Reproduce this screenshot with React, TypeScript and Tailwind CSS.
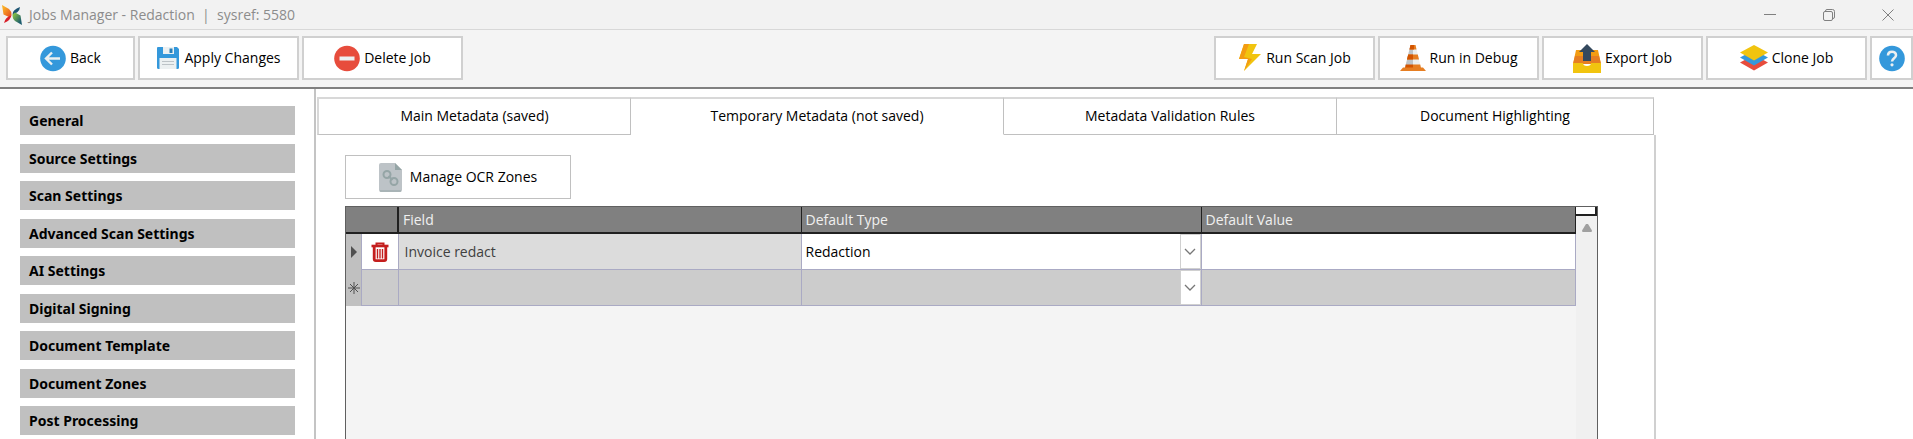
import type { ReactNode } from "react";

const sections = [
  "General",
  "Source Settings",
  "Scan Settings",
  "Advanced Scan Settings",
  "AI Settings",
  "Digital Signing",
  "Document Template",
  "Document Zones",
  "Post Processing",
];

const tabs = [
  "Main Metadata (saved)",
  "Temporary Metadata (not saved)",
  "Metadata Validation Rules",
  "Document Highlighting",
];

function LogoIcon() {
  return (
    <svg width="20" height="20" viewBox="0 0 20 20" aria-hidden="true">
      <defs>
        <linearGradient id="wing-left" x1="0" y1="0" x2="1" y2="1">
          <stop offset="0.2" stopColor="#f9ae25" />
          <stop offset="1" stopColor="#e5481f" />
        </linearGradient>
        <linearGradient id="wing-right" x1="0" y1="0" x2="1" y2="1">
          <stop offset="0.2" stopColor="#7ab648" />
          <stop offset="0.8" stopColor="#1c5b6e" />
        </linearGradient>
      </defs>
      <path d="M0 0 7 4Q9.500 6 9.500 10L7 12 1.500 9.500Z" fill="url(#wing-left)" />
      <path d="M9.500 10Q9 15 2 18Q3 12.500 9.500 10Z" fill="#d8202a" />
      <path d="M10.500 9.500Q10.500 4.500 18 2Q17.500 7.500 10.500 9.500Z" fill="#1d5573" />
      <path d="M10.500 9.500 13 7.500 18.500 10.500 20 20 13 16Q10.500 14 10.500 9.500Z" fill="url(#wing-right)" />
    </svg>
  );
}

function BackIcon() {
  return (
    <svg width="26" height="27" viewBox="0 0 26 27" aria-hidden="true">
      <circle cx="13" cy="13.500" r="12.800" fill="#3498db" />
      <path d="M20 13.500H7M12 7.500l-6 6 6 6" fill="none" stroke="#ecf0f1" strokeWidth="2.400" />
    </svg>
  );
}

function SaveIcon() {
  return (
    <svg width="24" height="24" viewBox="0 0 24 24" aria-hidden="true">
      <path d="M2 1h19l2 2v18.500a1.500 1.500 0 0 1-1.500 1.500h-19A1.500 1.500 0 0 1 1 21.500V2a1 1 0 0 1 1-1Z" fill="#3498db" />
      <path d="M7 1h11v7H7Z" fill="#ecf0f1" />
      <path d="M13.500 2.500h3v4.500h-3Z" fill="#2980b9" />
      <path d="M3.500 12h17v11h-17Z" fill="#ecf0f1" />
      <path d="M6 15.500h12M6 18.500h12" stroke="#bdc3c7" strokeWidth="1.200" />
    </svg>
  );
}

function DeleteIcon() {
  return (
    <svg width="26" height="27" viewBox="0 0 26 27" aria-hidden="true">
      <circle cx="13" cy="13.500" r="12.800" fill="#e74c3c" />
      <path d="M5.500 11.500h15v4h-15Z" fill="#ecf0f1" />
    </svg>
  );
}

function BoltIcon() {
  return (
    <svg width="24" height="28" viewBox="0 0 24 28" aria-hidden="true">
      <path d="M6 0h13l-5 10h9L6 27l4-12H1Z" fill="#f1c40f" />
      <path d="M6 0h5L6 13l8 2-8 12 4-12H1Z" fill="#f39c12" />
    </svg>
  );
}

function ConeIcon() {
  return (
    <svg width="26" height="26" viewBox="0 0 26 26" aria-hidden="true">
      <path d="M10.500 0h5L21 23H5Z" fill="#ecf0f1" />
      <path d="M10.500 0H13v23H5Z" fill="#bdc3c7" />
      <path d="M10.500 0h5l1 4.500h-7ZM8.200 9.500h9.600l1.200 5H7Z" fill="#e67e22" />
      <path d="M10.500 0H14v4.500H9.500ZM8.200 9.500H13v5H7ZM5.700 19.500H13V23H5Z" fill="#d35400" />
      <path d="M13 19.500h7.200L21 23h-8Z" fill="#e67e22" />
      <path d="M3 22.500h20l3 3.500H0Z" fill="#e67e22" />
    </svg>
  );
}

function ExportIcon() {
  return (
    <svg width="28" height="29" viewBox="0 0 28 29" aria-hidden="true">
      <path d="M3 6h22l3 14H0Z" fill="#f39c12" />
      <path d="M2 12h24l2 8H0Z" fill="#e67e22" />
      <path d="M0 19h10a4 3 0 0 0 8 0h10v10H0Z" fill="#f1c40f" />
      <path d="M14 0l8 8h-4v9h-8V8H6Z" fill="#34495e" />
    </svg>
  );
}

function LayersIcon() {
  return (
    <svg width="28" height="26" viewBox="0 0 28 26" aria-hidden="true">
      <path d="M0 17.500 14 10l14 7.500L14 25.500Z" fill="#e74c3c" />
      <path d="M0 12.500 14 5l14 7.500L14 20.500Z" fill="#3498db" />
      <path d="M0 7.500 14 0l14 7.500L14 15.500Z" fill="#f1c40f" />
    </svg>
  );
}

function HelpIcon() {
  return (
    <svg width="26" height="27" viewBox="0 0 26 27" aria-hidden="true">
      <circle cx="13" cy="13.500" r="12.800" fill="#3498db" />
      <path d="M9 10.500C9 5.500 17 5.500 17 10.200c0 3-4 3-4 6.300" fill="none" stroke="#ecf0f1" strokeWidth="2.600" />
      <circle cx="13" cy="19.800" r="1.600" fill="#ecf0f1" />
    </svg>
  );
}

function LinkFileIcon() {
  return (
    <svg width="23" height="29" viewBox="0 0 23 29" aria-hidden="true">
      <path d="M2 0h14l7 7v20a2 2 0 0 1-2 2H2a2 2 0 0 1-2-2V2a2 2 0 0 1 2-2Z" fill="#bdc3c7" />
      <path d="M16 0l7 7h-7Z" fill="#95a5a6" />
      <path d="M1 28h21" stroke="#95a5a6" />
      <g fill="none" stroke="#95a5a6" strokeWidth="2">
        <circle cx="8" cy="11.500" r="3.500" />
        <circle cx="15" cy="18.500" r="3.500" />
        <path d="M9.500 13l4 4" />
      </g>
    </svg>
  );
}

function TrashIcon() {
  return (
    <svg width="18" height="20" viewBox="0 0 18 20" aria-hidden="true">
      <g fill="none" stroke="#c41e1e">
        <path d="M0.500 4h17" strokeWidth="2.600" />
        <path d="M5.500 3.500V1.500h7v2" strokeWidth="2" />
        <path d="M3.200 4.500V17q0 1.600 1.600 1.600h8.400Q14.800 18.600 14.800 17V4.500" strokeWidth="2.800" />
        <path d="M6.500 7v9.500M9 7v9.500M11.500 7v9.500" strokeWidth="1.400" />
      </g>
    </svg>
  );
}

function ToolButton({ icon, label }: { icon: ReactNode; label: string }) {
  return (
    <button
      type="button"
      className="flex h-11 w-[161px] items-center justify-center gap-1 border-2 border-[#d0d0d0] bg-white"
    >
      {icon}
      <span>{label}</span>
    </button>
  );
}

function TypeSelect({ label, value }: { label: string; value: string }) {
  return (
    <div className="relative h-[35px]">
      <select
        aria-label={label}
        defaultValue={value}
        className="h-full w-full appearance-none bg-transparent pl-1 pr-6 outline-none"
      >
        <option value=""></option>
        <option value="Redaction">Redaction</option>
      </select>
      <span className="pointer-events-none absolute inset-y-0 right-0 flex w-[21px] items-center justify-center border border-[#d0d0d0] bg-white">
        <svg width="12" height="8" viewBox="0 0 12 8" aria-hidden="true">
          <path d="M1 1l5 5 5-5" fill="none" stroke="#777" strokeWidth="1.300" />
        </svg>
      </span>
    </div>
  );
}

export default function App() {
  return (
    <div className="flex min-h-screen flex-col bg-white font-['Open_Sans',sans-serif] text-sm text-black">
      <header className="flex h-[30px] items-center border-b border-[#d8d8d8] bg-[#f2f2f2] pl-0.5">
        <LogoIcon />
        <h1 className="ml-[7px] flex-1 whitespace-pre text-[#8c8c8c]">
          Jobs Manager - Redaction&nbsp; |&nbsp; sysref: 5580
        </h1>
        <div className="flex gap-[47px] pr-[19px] text-[#808080]">
          <button type="button" aria-label="Minimize">
            <svg width="12" height="12" viewBox="0 0 12 12" fill="none" stroke="currentColor">
              <path d="M0 5.500h12" />
            </svg>
          </button>
          <button type="button" aria-label="Restore">
            <svg width="12" height="12" viewBox="0 0 12 12" fill="none" stroke="currentColor">
              <rect x="0.500" y="2.500" width="9" height="9" rx="1.500" />
              <path d="M2.500 2.500V2Q2.500 0.500 4 0.500h5.500q2 0 2 2V8q0 1.500-1.500 1.500" />
            </svg>
          </button>
          <button type="button" aria-label="Close">
            <svg width="12" height="12" viewBox="0 0 12 12" fill="none" stroke="currentColor">
              <path d="M0.500 0.500l11 11M11.500 0.500l-11 11" />
            </svg>
          </button>
        </div>
      </header>

      <div className="flex h-[59px] justify-between border-b-2 border-[#808080] bg-[#f4f4f4] pl-1.5 pt-1.5">
        <div className="flex gap-[3px]">
          <button
            type="button"
            className="flex h-11 w-[129px] items-center justify-center gap-1 border-2 border-[#d0d0d0] bg-white"
          >
            <BackIcon />
            <span>Back</span>
          </button>
          <ToolButton icon={<SaveIcon />} label="Apply Changes" />
          <ToolButton icon={<DeleteIcon />} label="Delete Job" />
        </div>
        <div className="flex gap-[3px]">
          <ToolButton icon={<BoltIcon />} label="Run Scan Job" />
          <ToolButton icon={<ConeIcon />} label="Run in Debug" />
          <ToolButton icon={<ExportIcon />} label="Export Job" />
          <ToolButton icon={<LayersIcon />} label="Clone Job" />
          <button
            type="button"
            aria-label="Help"
            className="flex h-11 w-[43px] items-center justify-center border-2 border-[#d0d0d0] bg-white"
          >
            <HelpIcon />
          </button>
        </div>
      </div>

      <div className="flex flex-1">
        <nav className="flex w-[314px] shrink-0 flex-col pl-5 pr-[19px] pt-[17px] font-['Noto_Sans',sans-serif]">
          {sections.map((section) => (
            <button
              key={section}
              type="button"
              className="h-[29px] bg-[#c0c0c0] px-[9px] pt-px text-left font-bold odd:mb-[9px] even:mb-2 last:mb-0"
            >
              {section}
            </button>
          ))}
        </nav>

        <main className="mr-[257px] flex flex-1 flex-col border-l-2 border-[#c4c4c4] pt-2">
          <div role="tablist" className="grid grid-cols-[315fr_373fr_333fr_319fr]">
            {tabs.map((tab, i) => (
              <button
                key={tab}
                type="button"
                role="tab"
                aria-selected={i === 1}
                className="h-[38px] border-b border-r border-t-2 border-b-[#c0c0c0] border-r-[#c0c0c0] border-t-[#d8d8d8] pb-0.5 first:ml-px first:border-l-2 first:border-l-[#d8d8d8] last:mr-0.5 aria-selected:border-b-transparent"
              >
                {tab}
              </button>
            ))}
          </div>

          <section className="flex flex-1 flex-col border-r-2 border-[#d0d0d0] pl-[29px] pr-14 pt-5">
            <button
              type="button"
              className="flex h-11 w-[226px] items-center justify-center gap-2 border border-[#c0c0c0]"
            >
              <LinkFileIcon />
              <span>Manage OCR Zones</span>
            </button>

            <div className="mt-[7px] flex flex-1 border-x border-t border-[#606060] bg-[#f4f4f4]">
              <div className="flex-1">
                <table className="w-full table-fixed border-collapse text-left">
                  <colgroup>
                    <col className="w-[15px]" />
                    <col className="w-[37px]" />
                    <col className="w-[403px]" />
                    <col className="w-[400px]" />
                    <col />
                  </colgroup>
                  <thead>
                    <tr className="h-[26px] border-b-2 border-[#202020] bg-[#808080] text-[#f0f0f0]">
                      <td colSpan={2} className="border-r-2 border-[#202020]"></td>
                      <th className="border-r border-[#202020] px-1 font-normal">Field</th>
                      <th className="border-r border-[#202020] px-1 font-normal">Default Type</th>
                      <th className="border-r border-[#202020] px-1 font-normal">Default Value</th>
                    </tr>
                  </thead>
                  <tbody>
                    <tr className="h-9">
                      <td className="bg-[#c0c0c0]">
                        <svg width="14" height="12" viewBox="0 0 14 12" aria-hidden="true">
                          <path d="M5 0l6 6-6 6Z" fill="#505050" />
                        </svg>
                      </td>
                      <td className="border border-[#aaaac4] bg-white">
                        <button type="button" aria-label="Delete field" className="flex w-full justify-center">
                          <TrashIcon />
                        </button>
                      </td>
                      <td className="border border-[#aaaac4] bg-[#dcdcdc] px-1.5 text-[#404040]">Invoice redact</td>
                      <td className="border border-[#aaaac4] bg-white">
                        <TypeSelect label="Default type" value="Redaction" />
                      </td>
                      <td className="border border-[#aaaac4] bg-white">
                        <input type="text" aria-label="Default value" className="block w-full px-1 outline-none" />
                      </td>
                    </tr>
                    <tr className="h-9">
                      <td className="bg-[#c0c0c0]">
                        <svg width="14" height="12" viewBox="0 0 14 12" aria-hidden="true">
                          <path d="M8 0v12M2 6h12M4 2l8 8M12 2l-8 8" stroke="#505050" />
                        </svg>
                      </td>
                      <td className="border border-[#aaaac4] bg-[#cccccc]"></td>
                      <td className="border border-[#aaaac4] bg-[#cccccc]">
                        <input type="text" aria-label="New field" className="block w-full px-1.5 outline-none" />
                      </td>
                      <td className="border border-[#aaaac4] bg-[#cccccc]">
                        <TypeSelect label="New default type" value="" />
                      </td>
                      <td className="border border-[#aaaac4] bg-[#cccccc]">
                        <input type="text" aria-label="New default value" className="block w-full px-1 outline-none" />
                      </td>
                    </tr>
                  </tbody>
                </table>
              </div>
              <div className="flex w-[21px] flex-col items-center bg-[#f0f0f0]">
                <div className="h-[9px] w-full border-b-2 border-r-2 border-[#202020] bg-white"></div>
                <svg className="mt-2" width="10" height="8" viewBox="0 0 10 8" aria-hidden="true">
                  <path d="M4 0h2l4 6.500q0 1.500-1 1.500H1q-1 0-1-1.500Z" fill="#a0a0a0" />
                </svg>
              </div>
            </div>
          </section>
        </main>
      </div>
    </div>
  );
}
